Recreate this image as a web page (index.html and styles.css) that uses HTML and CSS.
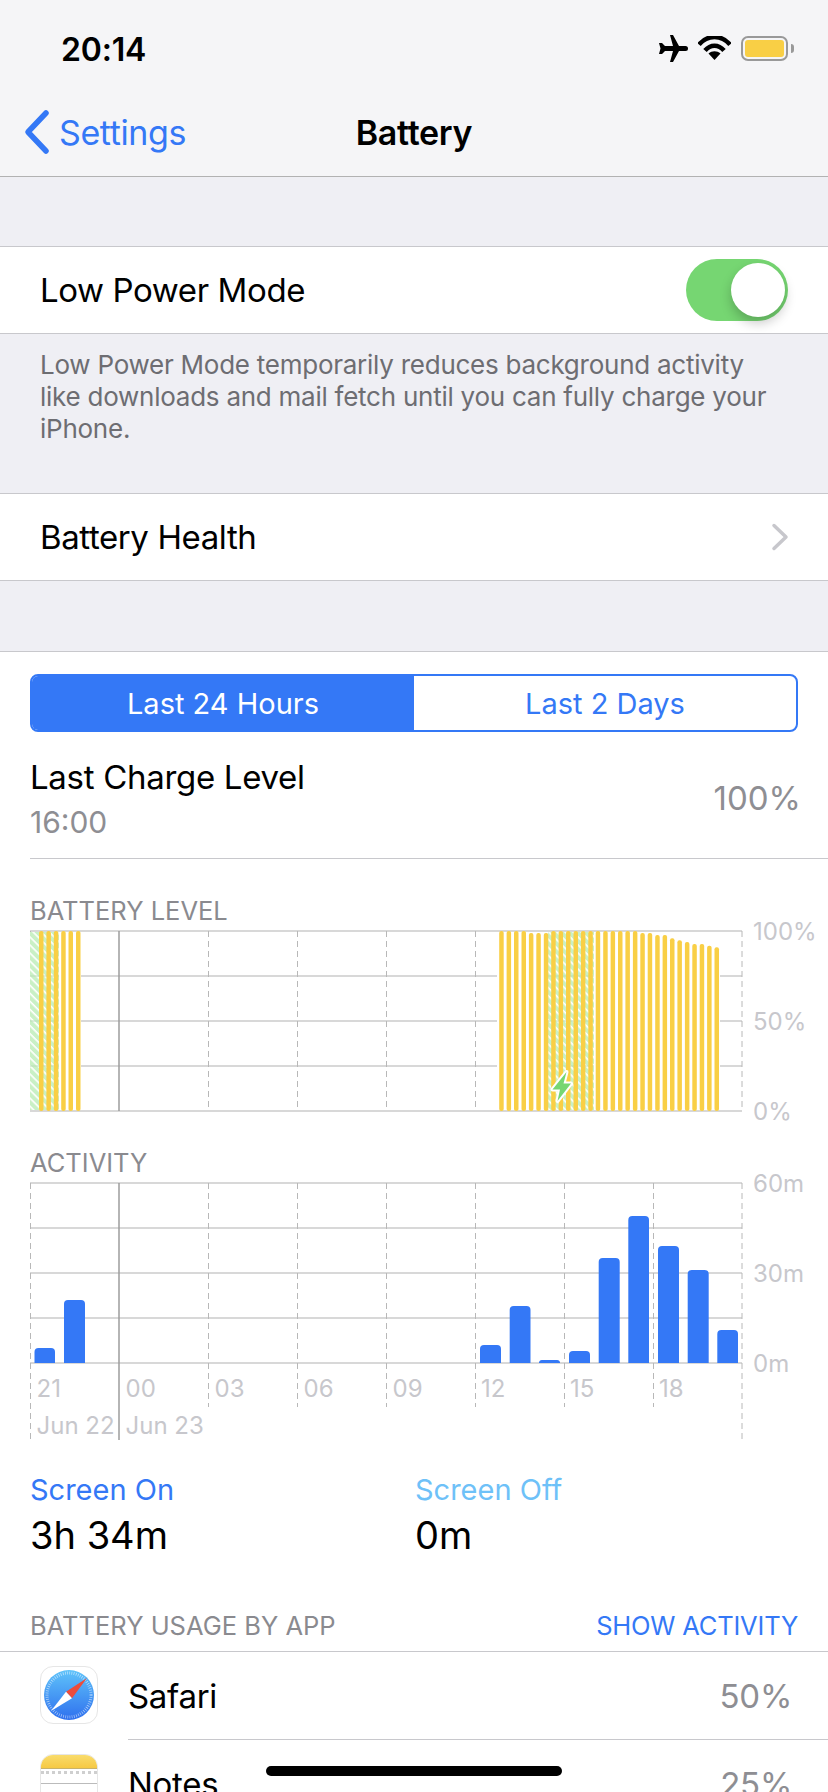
FILE: index.html
```html
<!DOCTYPE html>
<html lang="en">
<head>
  <meta charset="UTF-8">
  <meta name="viewport" content="width=device-width, initial-scale=1.0">
  <title>Battery</title>
  <link rel="stylesheet" href="styles.css">
</head>
<body>
  <div class="phone">
    <header class="top">
      <div class="status">
        <span class="clock">20:14</span>
        <div class="status-icons">
          <svg class="plane" width="30" height="27" viewBox="0 0 30 27">
            <path d="M12 0l3 0 6 11h6.500a2.500 2.500 0 0 1 0 5H21l-6 11h-3l3-11H7l-3 3H1l1.500-5.500L1 8h3l3 3h8z"/>
          </svg>
          <svg class="wifi" width="33" height="24" viewBox="0 0 33 24">
            <path d="M1 8.500C9.500 -1.500 23.500 -1.500 32 8.500" class="wifi-arc"/>
            <path d="M7 14.500C12.500 8 20.500 8 26 14.500" class="wifi-arc"/>
            <path d="M16.500 24l-6-6.500c3.500-3 8.500-3 12 0z"/>
          </svg>
          <div class="battery"><div class="battery-fill"></div></div>
          <div class="battery-nub"></div>
        </div>
      </div>
      <nav class="nav">
        <a class="back">
          <svg width="30" height="46" viewBox="0 0 30 46"><path d="M24 4L6 23l18 19"/></svg>
          <span>Settings</span>
        </a>
        <h1>Battery</h1>
      </nav>
    </header>

    <div class="gap gap-first"></div>
    <div class="row">
      <span>Low Power Mode</span>
      <div class="toggle"><div class="knob"></div></div>
    </div>
    <p class="note">Low Power Mode temporarily reduces background activity like downloads and mail fetch until you can fully charge your iPhone.</p>
    <div class="row">
      <span>Battery Health</span>
      <svg class="chevron" width="18" height="28" viewBox="0 0 18 28"><path d="M3 2.500l12 11.500L3 25.500"/></svg>
    </div>
    <div class="gap"></div>

    <section class="panel">
      <div class="segments">
        <div class="segment active">Last 24 Hours</div>
        <div class="segment">Last 2 Days</div>
      </div>

      <div class="charge">
        <div>
          <div class="charge-title">Last Charge Level</div>
          <div class="charge-time">16:00</div>
        </div>
        <div class="charge-value">100%</div>
      </div>

      <div class="chart-title">BATTERY LEVEL</div>
      <svg class="chart" width="828" height="196" viewBox="0 0 828 196">
        <defs>
          <pattern id="hatch" width="5.700" height="5.700" patternUnits="userSpaceOnUse" patternTransform="rotate(45)">
            <rect width="5.700" height="5.700" fill="#c9f0c5"/>
            <rect width="5.700" height="1.600" fill="#fff"/>
          </pattern>
        </defs>
        <!-- grid -->
        <path class="grid" d="M30 1H742M30 46H742M30 91H742M30 136H742M30 181H742"/>
        <path class="dash" d="M30.500 1V181M208.500 1V181M297.500 1V181M386.500 1V181M475.500 1V181M742 1V181"/>
        <path class="midnight" d="M119 1V181"/>
        <!-- the bars sit on a white strip so the grid doesn't show in the gaps -->
        <rect class="backing" x="37" y="2" width="44" height="178"/>
        <rect class="backing" x="497" y="2" width="223" height="178"/>
        <!-- charging windows, grid shows through faintly -->
        <rect x="30" y="2" width="29" height="178" fill="url(#hatch)"/>
        <rect x="548" y="2" width="46" height="178" fill="url(#hatch)"/>
        <path class="grid-faint" d="M30 46H59M30 91H59M30 136H59M548 46H594M548 91H594M548 136H594"/>
        <!-- level bars, one per 15 minutes -->
        <g class="level">
          <rect x="39" y="1" width="4.500" height="180" rx="2"/>
          <rect x="46.400" y="1" width="4.500" height="180" rx="2"/>
          <rect x="53.800" y="1" width="4.500" height="180" rx="2"/>
          <rect x="61.200" y="1" width="4.500" height="180" rx="2"/>
          <rect x="68.500" y="1" width="4.500" height="180" rx="2"/>
          <rect x="76" y="1" width="4.500" height="180" rx="2"/>

          <rect x="499.200" y="1" width="4.500" height="180" rx="2"/>
          <rect x="506.600" y="1" width="4.500" height="180" rx="2"/>
          <rect x="514" y="1" width="4.500" height="180" rx="2"/>
          <rect x="521.500" y="1" width="4.500" height="180" rx="2"/>
          <rect x="528.900" y="3" width="4.500" height="178" rx="2"/>
          <rect x="536.300" y="3" width="4.500" height="178" rx="2"/>
          <rect x="543.800" y="3" width="4.500" height="178" rx="2"/>
          <rect x="551.200" y="1" width="4.500" height="180" rx="2"/>
          <rect x="558.600" y="1" width="4.500" height="180" rx="2"/>
          <rect x="566" y="1" width="4.500" height="180" rx="2"/>
          <rect x="573.500" y="1" width="4.500" height="180" rx="2"/>
          <rect x="580.900" y="1" width="4.500" height="180" rx="2"/>
          <rect x="588.300" y="1" width="4.500" height="180" rx="2"/>
          <rect x="595.700" y="1" width="4.500" height="180" rx="2"/>
          <rect x="603.200" y="1" width="4.500" height="180" rx="2"/>
          <rect x="610.600" y="1" width="4.500" height="180" rx="2"/>
          <rect x="618" y="1" width="4.500" height="180" rx="2"/>
          <rect x="625.400" y="1" width="4.500" height="180" rx="2"/>
          <rect x="632.900" y="1" width="4.500" height="180" rx="2"/>
          <rect x="640.300" y="3" width="4.500" height="178" rx="2"/>
          <rect x="647.700" y="3" width="4.500" height="178" rx="2"/>
          <rect x="655.200" y="5" width="4.500" height="176" rx="2"/>
          <rect x="662.600" y="5" width="4.500" height="176" rx="2"/>
          <rect x="670" y="8.300" width="4.500" height="172.700" rx="2"/>
          <rect x="677.400" y="10.300" width="4.500" height="170.700" rx="2"/>
          <rect x="684.900" y="12" width="4.500" height="169" rx="2"/>
          <rect x="692.300" y="14" width="4.500" height="167" rx="2"/>
          <rect x="699.700" y="14" width="4.500" height="167" rx="2"/>
          <rect x="707.100" y="15.700" width="4.500" height="165.300" rx="2"/>
          <rect x="714.500" y="17.300" width="4.500" height="163.700" rx="2"/>
        </g>
        <path class="bolt" d="M566.500 142L552.500 159.500H560L557.500 171L571 153.500H563.500z"/>
        <text class="axis" x="753" y="10">100%</text>
        <text class="axis" x="753" y="100">50%</text>
        <text class="axis" x="753" y="190">0%</text>
      </svg>

      <div class="chart-title chart-title-activity">ACTIVITY</div>
      <svg class="chart" width="828" height="258" viewBox="0 0 828 258">
        <path class="grid" d="M30 1H742M30 46H742M30 91H742M30 136H742M30 181H742"/>
        <path class="dash" d="M30.500 1V258M208.500 1V225M297.500 1V225M386.500 1V225M475.500 1V225M564.500 1V225M653.500 1V225M742 1V258"/>
        <path class="midnight" d="M119 1V258"/>
        <g class="usage">
          <path d="M34.500 181v-11a4 4 0 0 1 4-4H51a4 4 0 0 1 4 4v11z"/>
          <path d="M64 181V122a4 4 0 0 1 4-4H81a4 4 0 0 1 4 4v59z"/>
          <path d="M480 181v-14a4 4 0 0 1 4-4H497a4 4 0 0 1 4 4v14z"/>
          <path d="M509.700 181V128a4 4 0 0 1 4-4H526.500a4 4 0 0 1 4 4v53z"/>
          <path d="M539 181v-1a3 3 0 0 1 3-2H557a3 3 0 0 1 3 2v1z"/>
          <path d="M569 181v-8a4 4 0 0 1 4-4H586a4 4 0 0 1 4 4v8z"/>
          <path d="M598.700 181V80a4 4 0 0 1 4-4H615.700a4 4 0 0 1 4 4v101z"/>
          <path d="M628.300 181V38a4 4 0 0 1 4-4H645a4 4 0 0 1 4 4v143z"/>
          <path d="M658 181V68a4 4 0 0 1 4-4H675a4 4 0 0 1 4 4v113z"/>
          <path d="M687.700 181V92a4 4 0 0 1 4-4H704.700a4 4 0 0 1 4 4v89z"/>
          <path d="M717.300 181V152a4 4 0 0 1 4-4H734a4 4 0 0 1 4 4v29z"/>
        </g>
        <text class="axis" x="753" y="10">60m</text>
        <text class="axis" x="753" y="100">30m</text>
        <text class="axis" x="753" y="190">0m</text>
        <text class="axis" x="36.500" y="214.500">21</text>
        <text class="axis" x="125.500" y="214.500">00</text>
        <text class="axis" x="214.500" y="214.500">03</text>
        <text class="axis" x="303.500" y="214.500">06</text>
        <text class="axis" x="392.500" y="214.500">09</text>
        <text class="axis" x="481" y="214.500">12</text>
        <text class="axis" x="570" y="214.500">15</text>
        <text class="axis" x="659" y="214.500">18</text>
        <text class="axis" x="36.500" y="251.500">Jun 22</text>
        <text class="axis" x="125.500" y="251.500">Jun 23</text>
      </svg>

      <div class="totals">
        <div class="total">
          <div class="total-label on">Screen On</div>
          <div class="total-value">3h 34m</div>
        </div>
        <div class="total">
          <div class="total-label off">Screen Off</div>
          <div class="total-value">0m</div>
        </div>
      </div>

      <div class="usage-head">
        <span>BATTERY USAGE BY APP</span>
        <a>SHOW ACTIVITY</a>
      </div>

      <div class="apps">
        <div class="app">
          <div class="app-icon safari">
            <svg width="50" height="50" viewBox="0 0 50 50">
              <defs>
                <linearGradient id="sky" x1="0" y1="0" x2="0" y2="1">
                  <stop offset="0" stop-color="#5fc3fa"/>
                  <stop offset="1" stop-color="#2f70ee"/>
                </linearGradient>
              </defs>
              <circle cx="25" cy="25" r="25" fill="url(#sky)"/>
              <circle cx="25" cy="25" r="22" class="ticks"/>
              <path d="M43 8L28 28.300 22 21.700z" fill="#ec4c3c"/>
              <path d="M7 41L22 21.700 28 28.300z" fill="#fff"/>
            </svg>
          </div>
          <div class="app-body">
            <span>Safari</span>
            <span class="app-pct">50%</span>
          </div>
        </div>
        <div class="app">
          <div class="app-icon notes">
            <div class="notes-cap"></div>
            <div class="notes-dots"></div>
            <div class="notes-line"></div>
          </div>
          <div class="app-body">
            <span>Notes</span>
            <span class="app-pct">25%</span>
          </div>
        </div>
      </div>
    </section>

    <div class="home-bar"></div>
  </div>
</body>
</html>
```

FILE: styles.css
```css
* {
  box-sizing: border-box;
}

html, body {
  margin: 0;
  height: 100%;
}

body {
  background-color: #efeff4;
  font-family: Inter, "Liberation Sans", sans-serif;
  color: #000;
}

.phone {
  position: relative;
  width: 828px;
  height: 1792px;
  overflow: hidden;
}

/* status bar and nav */
.top {
  height: 177px;
  background-color: #f5f5f7;
  border-bottom: 1px solid #b2b2b2;
}

.status {
  height: 88px;
  display: flex;
  justify-content: space-between;
  align-items: center;
  padding: 8px 34px 0 61px;
}

.clock {
  font-size: 32px;
  font-weight: 600;
  letter-spacing: -0.2px;
  position: relative;
  top: 1px;
}

.status-icons {
  display: flex;
  align-items: center;
}

.plane {
  margin-right: 10px;
}

.wifi {
  margin-right: 10px;
}

.wifi-arc {
  fill: none;
  stroke: #000;
  stroke-width: 4.500px;
}

.battery {
  width: 47px;
  height: 25px;
  border: 2px solid #999;
  border-radius: 7px;
  padding: 2px;
}

.battery-fill {
  height: 100%;
  background-color: #f9cf45;
  border-radius: 3px;
}

.battery-nub {
  width: 3px;
  height: 9px;
  margin-left: 3px;
  background-color: #999;
  border-radius: 0 3px 3px 0;
}

.nav {
  position: relative;
  height: 88px;
  display: flex;
  align-items: center;
  justify-content: center;
}

.nav h1 {
  margin: 0;
  font-size: 34px;
  font-weight: 600;
  letter-spacing: -0.3px;
}

.back {
  position: absolute;
  left: 22px;
  top: 0;
  height: 88px;
  display: flex;
  align-items: center;
  gap: 7px;
  color: #3478f6;
  font-size: 34px;
  letter-spacing: -0.4px;
}

.back svg path {
  fill: none;
  stroke: #3478f6;
  stroke-width: 5.500px;
  stroke-linecap: round;
  stroke-linejoin: round;
}

/* settings rows */
.gap {
  height: 70px;
}

.gap-first {
  height: 69px;
}

.row {
  height: 88px;
  display: flex;
  align-items: center;
  justify-content: space-between;
  padding: 0 40px;
  background-color: #fff;
  border-top: 1px solid #c8c8cc;
  border-bottom: 1px solid #c8c8cc;
  font-size: 33px;
  letter-spacing: -0.4px;
}

.toggle {
  position: relative;
  width: 102px;
  height: 62px;
  background-color: #76d672;
  border-radius: 31px;
}

.knob {
  position: absolute;
  right: 3px;
  top: 4px;
  width: 54px;
  height: 54px;
  background-color: #fff;
  border-radius: 50%;
  box-shadow: 0 6px 12px rgba(0, 0, 0, 0.22);
}

.chevron {
  margin-right: -1px;
}

.chevron path {
  fill: none;
  stroke: #c7c7cc;
  stroke-width: 3.500px;
  stroke-linecap: round;
  stroke-linejoin: round;
}

.note {
  margin: 0;
  height: 159px;
  padding: 15px 40px 0;
  font-size: 26px;
  line-height: 32px;
  letter-spacing: -0.25px;
  color: #6d6d72;
}

/* usage panel */
.panel {
  background-color: #fff;
  border-top: 1px solid #c8c8cc;
}

.segments {
  display: flex;
  height: 58px;
  margin: 22px 30px 0;
  border: 2px solid #3478f6;
  border-radius: 8px;
  overflow: hidden;
}

.segment {
  flex: 1;
  display: flex;
  align-items: center;
  justify-content: center;
  color: #3478f6;
  font-size: 29px;
}

.segment.active {
  background-color: #3478f6;
  color: #fff;
}

.charge {
  display: flex;
  justify-content: space-between;
  align-items: center;
  height: 127px;
  margin-left: 30px;
  padding: 6px 27px 0 0;
  border-bottom: 1px solid #c8c8cc;
}

.charge-title {
  font-size: 33px;
  letter-spacing: -0.3px;
}

.charge-time {
  margin-top: 7px;
  font-size: 30px;
  color: #8e8e93;
}

.charge-value {
  font-size: 33px;
  color: #8e8e93;
}

.chart-title {
  margin: 34px 0 0 30px;
  height: 37px;
  font-size: 25.500px;
  line-height: 36px;
  color: #8a8a8f;
}

.chart-title-activity {
  margin-top: 19px;
}

.chart {
  display: block;
  overflow: visible;
}

.grid {
  fill: none;
  stroke: #d8d8d8;
  stroke-width: 2px;
}

.grid-faint {
  fill: none;
  stroke: #b9d8b6;
  stroke-width: 1.500px;
  opacity: 0.6;
}

.dash {
  fill: none;
  stroke: #b8b8b8;
  stroke-width: 1px;
  stroke-dasharray: 6 4;
}

.midnight {
  fill: none;
  stroke: #9d9d9d;
  stroke-width: 1.500px;
}

.backing {
  fill: #fff;
}

.level rect {
  fill: #f9cf45;
}

.usage path {
  fill: #3478f6;
}

.bolt {
  fill: #76d672;
  stroke: #fff;
  stroke-width: 4px;
  stroke-linejoin: round;
  paint-order: stroke;
}

.axis {
  font-size: 24px;
  fill: #c7c7cc;
}

/* screen on / off totals */
.totals {
  display: flex;
  padding-left: 30px;
  margin-top: 32px;
}

.total {
  width: 385px;
}

.total-label {
  font-size: 29px;
}

.total-label.on {
  color: #3478f6;
}

.total-label.off {
  color: #6ec1f8;
}

.total-value {
  margin-top: 5px;
  font-size: 38px;
}

.usage-head {
  display: flex;
  justify-content: space-between;
  align-items: center;
  height: 36px;
  margin-top: 49px;
  padding: 0 30px;
  font-size: 25.500px;
  color: #8a8a8f;
}

.usage-head a {
  color: #3478f6;
  letter-spacing: -0.2px;
}

.apps {
  margin-top: 8px;
  border-top: 1px solid #c8c8cc;
}

.app {
  display: flex;
  padding-left: 40px;
  height: 88px;
}

.app-icon {
  flex: none;
  width: 58px;
  height: 58px;
  margin-top: 14px;
  border: 1px solid #e6e6e6;
  border-radius: 13px;
  overflow: hidden;
}

.safari {
  display: flex;
  align-items: center;
  justify-content: center;
}

.ticks {
  fill: none;
  stroke: rgba(255, 255, 255, 0.6);
  stroke-width: 3px;
  stroke-dasharray: 0.7 1.500;
}

.notes-cap {
  height: 14px;
  background: linear-gradient(#f9dc6c, #f6c944);
  border-bottom: 1px solid #c9b36a;
}

.notes-dots {
  height: 5px;
  border-bottom: 3px dotted #cfcfcf;
}

.notes-line {
  height: 10px;
  border-bottom: 1px solid #bbb;
}

.app-body {
  flex: 1;
  display: flex;
  align-items: center;
  justify-content: space-between;
  margin-left: 30px;
  padding-right: 36px;
  border-bottom: 1px solid #c8c8cc;
  font-size: 33px;
  letter-spacing: -0.3px;
}

.app-pct {
  color: #8e8e93;
}

/* swipe bar along the bottom edge */
.home-bar {
  position: absolute;
  left: 266px;
  top: 1766px;
  width: 296px;
  height: 10px;
  background-color: #000;
  border-radius: 5px;
}
```
